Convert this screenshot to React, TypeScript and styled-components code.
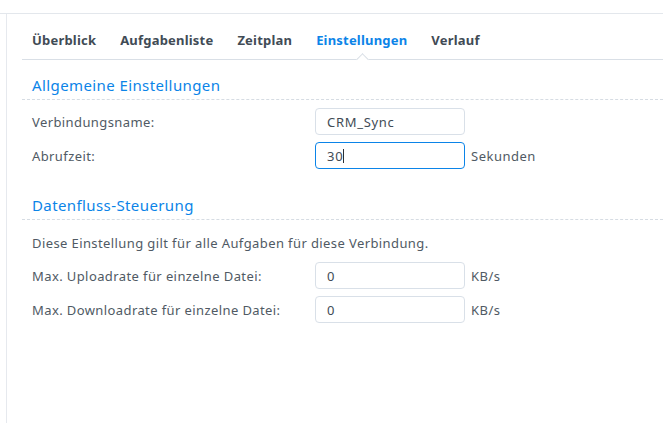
import styled, { createGlobalStyle, css } from "styled-components";

const GlobalStyle = createGlobalStyle`
  html, body {
    margin: 0;
    padding: 0;
    background: #ffffff;
  }
  body {
    font-family: "Noto Sans", "Liberation Sans", sans-serif;
    font-size: 13px;
    letter-spacing: 0.4px;
    color: #505a64;
  }
`;

const Page = styled.div`
  width: 663px;
  height: 423px;
  overflow: hidden;
  display: flex;
  flex-direction: column;
`;

const TopStrip = styled.div`
  height: 13px;
  border-bottom: 1px solid #e3e7ec;
  flex-shrink: 0;
`;

const Body = styled.div`
  flex: 1;
  display: flex;
  padding-left: 6px;
`;

const Panel = styled.div`
  flex: 1;
  border-left: 1px solid #e6e9ee;
  padding-left: 15px;
  display: flex;
  flex-direction: column;
`;

const TabBar = styled.div`
  display: flex;
  gap: 24px;
  padding-left: 10px;
  border-bottom: 1px solid #d9dfe6;
`;

const Tab = styled.div<{ active?: boolean }>`
  position: relative;
  padding: 16px 0 9px;
  line-height: 20px;
  font-size: 13px;
  font-weight: 700;
  letter-spacing: 0.2px;
  color: #414b55;

  ${(p) =>
    p.active &&
    css`
      color: #0b84e8;

      &::after {
        content: "";
        position: absolute;
        left: 50%;
        bottom: -5px;
        width: 8px;
        height: 8px;
        margin-left: -4px;
        background: #ffffff;
        border-top: 1px solid #d9dfe6;
        border-left: 1px solid #d9dfe6;
        transform: rotate(45deg);
      }
    `}
`;

const Section = styled.section<{ first?: boolean }>`
  margin-top: ${(p) => (p.first ? 0 : 11)}px;
`;

const SectionTitle = styled.h2`
  margin: 0;
  padding: 15px 10px 4px;
  line-height: 20px;
  font-size: 15px;
  font-weight: 400;
  letter-spacing: 0.4px;
  color: #0b84e8;
  border-bottom: 1px dashed #d6dce3;
`;

const Description = styled.p`
  margin: 13px 0 0;
  padding-left: 10px;
  line-height: 20px;
  font-size: 13px;
  color: #505a64;
`;

const Rows = styled.div<{ top: number }>`
  display: flex;
  flex-direction: column;
  gap: 7px;
  margin-top: ${(p) => p.top}px;
  padding-left: 10px;
`;

const Row = styled.div`
  display: flex;
  align-items: center;
  height: 27px;
`;

const Label = styled.span`
  width: 283px;
  flex-shrink: 0;
  font-size: 13px;
  color: #505a64;
`;

const Field = styled.div<{ focused?: boolean }>`
  box-sizing: border-box;
  width: 150px;
  height: 27px;
  display: flex;
  align-items: center;
  padding-left: 11px;
  border: 1px solid ${(p) => (p.focused ? "#0b84e8" : "#d9e0e8")};
  border-radius: 4px;
  background: #ffffff;
  font-size: 13px;
  letter-spacing: 0.7px;
  color: #414b55;
`;

const Caret = styled.span`
  display: inline-block;
  width: 1px;
  height: 14px;
  background: #2b2f33;
`;

const Unit = styled.span`
  margin-left: 6px;
  font-size: 13px;
  letter-spacing: 0.5px;
  color: #505a64;
`;

const tabs = ["Überblick", "Aufgabenliste", "Zeitplan", "Einstellungen", "Verlauf"];

export default function App() {
  return (
    <>
      <GlobalStyle />
      <Page>
        <TopStrip />
        <Body>
          <Panel>
            <TabBar>
              {tabs.map((t) => (
                <Tab key={t} active={t === "Einstellungen"}>
                  {t}
                </Tab>
              ))}
            </TabBar>

            <Section first>
              <SectionTitle>Allgemeine Einstellungen</SectionTitle>
              <Rows top={8}>
                <Row>
                  <Label>Verbindungsname:</Label>
                  <Field>CRM_Sync</Field>
                </Row>
                <Row>
                  <Label>Abrufzeit:</Label>
                  <Field focused>
                    30
                    <Caret />
                  </Field>
                  <Unit>Sekunden</Unit>
                </Row>
              </Rows>
            </Section>

            <Section>
              <SectionTitle>Datenfluss-Steuerung</SectionTitle>
              <Description>
                Diese Einstellung gilt für alle Aufgaben für diese Verbindung.
              </Description>
              <Rows top={9}>
                <Row>
                  <Label>Max. Uploadrate für einzelne Datei:</Label>
                  <Field>0</Field>
                  <Unit>KB/s</Unit>
                </Row>
                <Row>
                  <Label>Max. Downloadrate für einzelne Datei:</Label>
                  <Field>0</Field>
                  <Unit>KB/s</Unit>
                </Row>
              </Rows>
            </Section>
          </Panel>
        </Body>
      </Page>
    </>
  );
}
